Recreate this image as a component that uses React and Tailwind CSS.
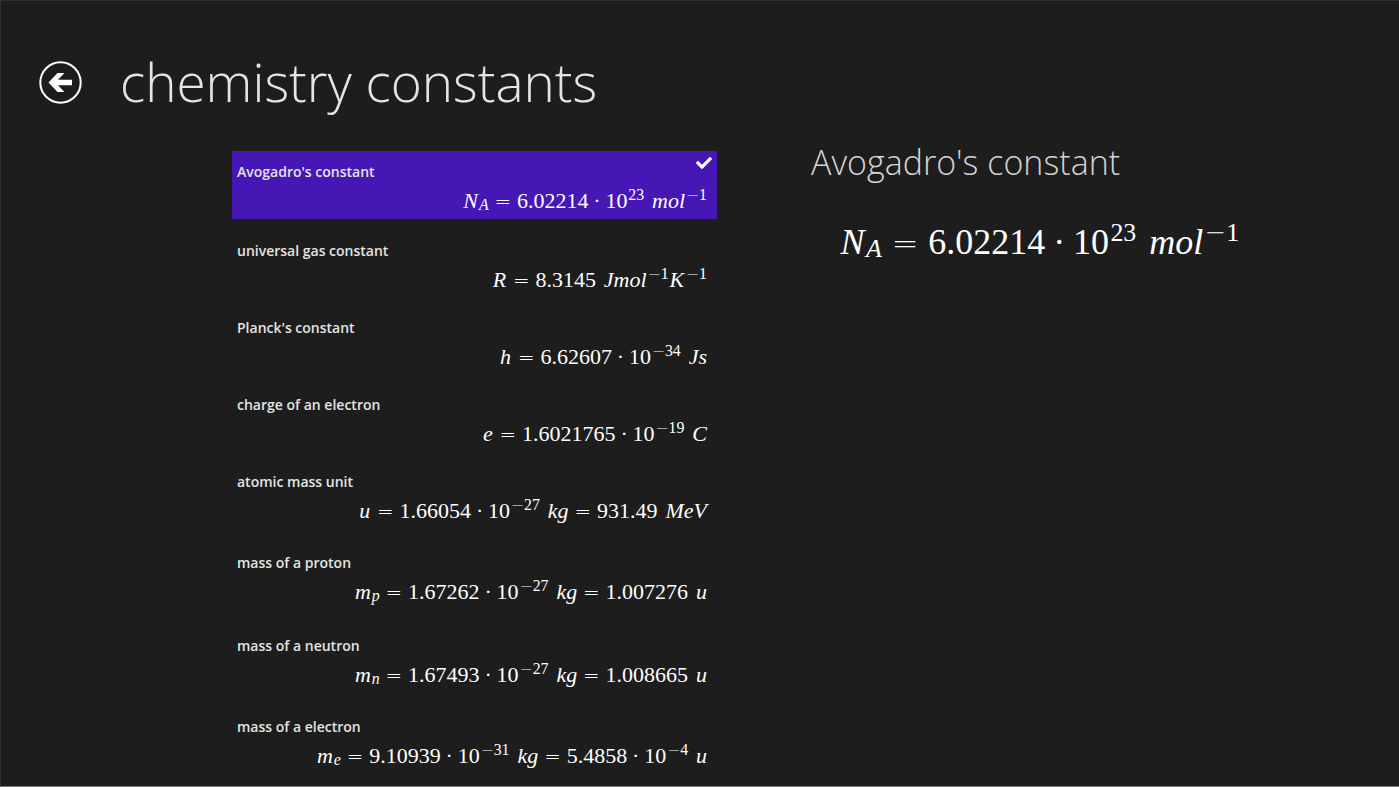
import React, { useState } from "react";
import { FaCheck } from "react-icons/fa";

const Eq = () => (
  <span className="mx-[0.3em] font-['DejaVu_Sans',sans-serif] text-[0.9em] leading-0 font-extralight">=</span>
);

const Dot = () => <span className="mx-[0.22em]">·</span>;

const Num = ({ children }) => <span>{children}</span>;

const Var = ({ children }) => <i className="mx-[0.04em]">{children}</i>;

const Unit = ({ children }) => <i className="ml-[0.36em]">{children}</i>;

const Sub = ({ children }) => <sub className="bottom-[-0.1em] text-[0.72em] italic">{children}</sub>;

const Sup = ({ minus, children }) => (
  <sup className="ml-[0.05em] text-[0.72em]">
    {minus && <span className="font-['DejaVu_Sans',sans-serif] font-extralight">−</span>}
    {children}
  </sup>
);

const constants = [
  {
    name: "Avogadro's constant",
    pad: "pb-[5px]",
    formula: <><Var>N</Var><Sub>A</Sub><Eq /><Num>6.02214</Num><Dot /><Num>10</Num><Sup>23</Sup><Unit>mol</Unit><Sup minus>1</Sup></>,
  },
  {
    name: "universal gas constant",
    pad: "pb-[3px]",
    formula: <><Var>R</Var><Eq /><Num>8.3145</Num><Unit>Jmol</Unit><Sup minus>1</Sup><Var>K</Var><Sup minus>1</Sup></>,
  },
  {
    name: "Planck's constant",
    pad: "pb-[3px]",
    formula: <><Var>h</Var><Eq /><Num>6.62607</Num><Dot /><Num>10</Num><Sup minus>34</Sup><Unit>Js</Unit></>,
  },
  {
    name: "charge of an electron",
    pad: "pb-[3px]",
    formula: <><Var>e</Var><Eq /><Num>1.6021765</Num><Dot /><Num>10</Num><Sup minus>19</Sup><Unit>C</Unit></>,
  },
  {
    name: "atomic mass unit",
    pad: "pb-[7px]",
    formula: <><Var>u</Var><Eq /><Num>1.66054</Num><Dot /><Num>10</Num><Sup minus>27</Sup><Unit>kg</Unit><Eq /><Num>931.49</Num><Unit>MeV</Unit></>,
  },
  {
    name: "mass of a proton",
    pad: "pb-[9px]",
    formula: <><Var>m</Var><Sub>p</Sub><Eq /><Num>1.67262</Num><Dot /><Num>10</Num><Sup minus>27</Sup><Unit>kg</Unit><Eq /><Num>1.007276</Num><Unit>u</Unit></>,
  },
  {
    name: "mass of a neutron",
    pad: "pb-[7px]",
    formula: <><Var>m</Var><Sub>n</Sub><Eq /><Num>1.67493</Num><Dot /><Num>10</Num><Sup minus>27</Sup><Unit>kg</Unit><Eq /><Num>1.008665</Num><Unit>u</Unit></>,
  },
  {
    name: "mass of a electron",
    pad: "pb-[3px]",
    formula: <><Var>m</Var><Sub>e</Sub><Eq /><Num>9.10939</Num><Dot /><Num>10</Num><Sup minus>31</Sup><Unit>kg</Unit><Eq /><Num>5.4858</Num><Dot /><Num>10</Num><Sup minus>4</Sup><Unit>u</Unit></>,
  },
];

const ConstantItem = ({ item, active, onSelect }) => (
  <li>
    <button
      onClick={onSelect}
      aria-pressed={active}
      className={`relative flex w-full flex-col items-start gap-[6px] pt-[11px] pr-[10px] pl-[5px] ${item.pad} ${active ? "bg-[#4617b4]" : ""}`}
    >
      <span className="text-sm font-semibold text-[#e4e4e4]">{item.name}</span>
      <span className="self-end font-['Liberation_Serif',serif] text-[22px] leading-[26px] whitespace-nowrap">
        {item.formula}
      </span>
      {active && <FaCheck className="absolute top-1 right-[5px] h-4 w-4" />}
    </button>
  </li>
);

const App = () => {
  const [selected, setSelected] = useState(0);
  const current = constants[selected];

  return (
    <div className="min-h-screen border-t border-b border-l border-t-[#303030] border-b-[#777777] border-l-[#303030] bg-[#1d1d1d] font-['Open_Sans',sans-serif] text-white">
      <header className="flex items-center gap-[38px] pt-[45px] pl-[37px]">
        <button aria-label="Back" className="h-[44px] w-[44px]">
          <svg viewBox="0 0 44 44" className="h-full w-full" fill="none">
            <circle cx="22.500" cy="22.500" r="20.200" stroke="white" strokeWidth="2" />
            <path d="M10.500 22.500 19.500 13H26.500L20 19.800H34V25.200H20L26.500 32H19.500Z" fill="white" />
          </svg>
        </button>
        <h1 className="text-[53px] leading-[72px] font-light text-[#e4e4e4]">chemistry constants</h1>
      </header>

      <main className="flex gap-[94px] pt-[33px] pr-10 pl-[231px]">
        <ul className="flex w-[485px] shrink-0 flex-col gap-[11px]">
          {constants.map((item, index) => (
            <ConstantItem
              key={item.name}
              item={item}
              active={index === selected}
              onSelect={() => setSelected(index)}
            />
          ))}
        </ul>

        <section className="min-w-0 flex-1">
          <h2 className="text-[34px] leading-[22px] font-light text-[#d4d4d4]">{current.name}</h2>
          <p className="mt-[49px] pl-7 font-['Liberation_Serif',serif] text-[36px] leading-10 whitespace-nowrap">
            {current.formula}
          </p>
        </section>
      </main>
    </div>
  );
};

export default App;
